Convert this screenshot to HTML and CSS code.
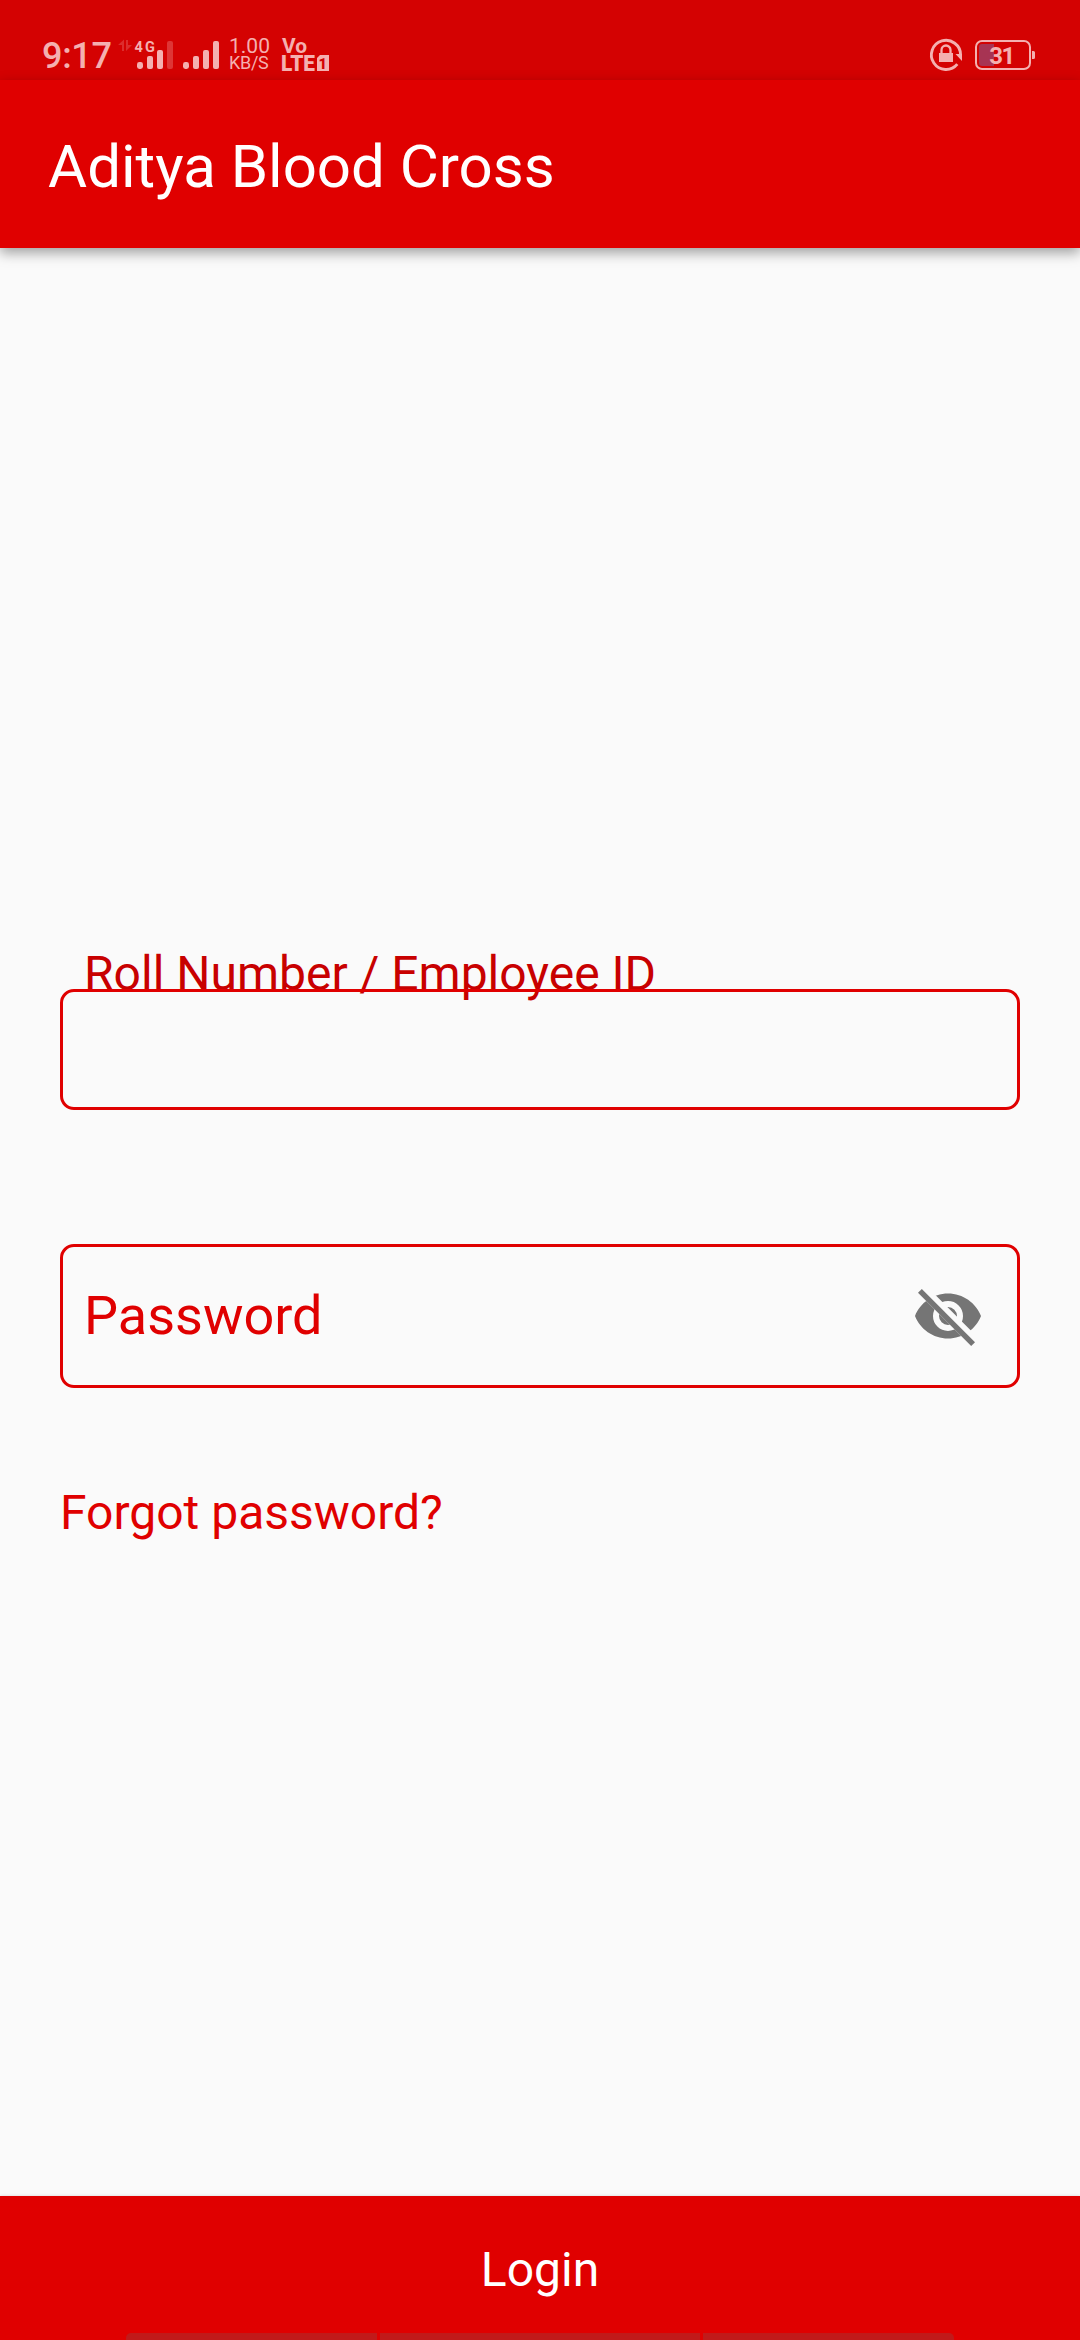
FILE: index.html
```html
<!DOCTYPE html>
<html lang="en">
<head>
<meta charset="utf-8">
<title>Aditya Blood Cross</title>
<link rel="stylesheet" href="styles.css">
</head>
<body>
<div class="screen">
  <div class="status-bar">
    <span class="clock">9:17</span>
    <svg class="signals" width="106" height="80" viewBox="0 0 106 80" fill="currentColor">
      <path class="faint" d="M0 45l6-5.500v11.500H4v-6H0zM8 40h2v5h4l-6 6z"/>
      <text x="16.500" y="51.800" class="network" textLength="20.500">4G</text>
      <rect x="19" y="62" width="6" height="7" rx="2.4"/>
      <rect x="29" y="56" width="6" height="13" rx="2"/>
      <rect x="39" y="50" width="6" height="19" rx="2"/>
      <rect class="dim" x="49" y="41" width="6" height="28" rx="2"/>
      <rect x="65" y="62" width="6" height="7" rx="2.4"/>
      <rect x="75" y="56" width="6" height="13" rx="2"/>
      <rect x="85" y="50" width="6" height="19" rx="2"/>
      <rect x="95" y="41" width="6" height="28" rx="2"/>
    </svg>
    <div class="speed"><span>1.00</span><span class="unit">KB/S</span></div>
    <svg class="volte" width="50" height="80" viewBox="0 0 50 80" fill="currentColor">
      <text x="0" y="53" class="vo" textLength="25" lengthAdjust="spacingAndGlyphs">Vo</text>
      <text x="-1" y="71" class="lte" textLength="34" lengthAdjust="spacingAndGlyphs">LTE</text>
      <path d="M38 55h9v16H35V58z"/>
      <text x="36.500" y="68.500" class="sim">1</text>
    </svg>
    <svg class="rotation-lock" width="34" height="80" viewBox="0 0 34 80" fill="currentColor">
      <path d="M27.300 64.200A14.600 14.600 0 1 1 30.600 55" fill="none" stroke="currentColor" stroke-width="2.9"/>
      <path d="M25.500 54H32v7z"/>
      <path d="M9 53h14v9H9z"/>
      <path d="M11.500 53v-3a4.500 4.500 0 0 1 9 0v3" fill="none" stroke="currentColor" stroke-width="2.3"/>
    </svg>
    <svg class="battery" width="62" height="80" viewBox="0 0 62 80" fill="currentColor">
      <path class="charge" d="M7 44h12v22H7a3 3 0 0 1-3-3V47a3 3 0 0 1 3-3z"/>
      <rect x="1" y="41" width="54" height="28" rx="6" fill="none" stroke="currentColor" stroke-width="2"/>
      <path d="M57 51h1.500a1.500 1.500 0 0 1 1.500 1.500v5a1.500 1.500 0 0 1-1.500 1.500H57z"/>
      <text x="14.200" y="64" class="level" textLength="26">31</text>
    </svg>
  </div>
  <header class="app-bar"><h1 class="title">Aditya Blood Cross</h1></header>
  <main class="form">
    <label class="id-label" for="user-id">Roll Number / Employee ID</label>
    <input class="field id-field" id="user-id" type="text">
    <div class="field password-field">
      <span class="hint">Password</span>
      <svg width="72" height="72" viewBox="0 0 24 24" fill="#757575">
        <clipPath id="strike-gap"><path d="M2 4.270L19.730 22 22.270 19.460 4.540 1.730V1H23v22H1V4.270z"/></clipPath>
        <path clip-path="url(#strike-gap)" fill-rule="evenodd" d="M12 4.500C7 4.500 2.730 7.610 1 12c1.730 4.390 6 7.500 11 7.500s9.270-3.110 11-7.500C21.270 7.610 17 4.500 12 4.500zM12 17a5 5 0 1 1 0-10 5 5 0 0 1 0 10zM12 9a3 3 0 1 0 0 6 3 3 0 0 0 0-6z"/>
        <path d="M2 4.270L3.270 3 21 20.730 19.730 22z"/>
      </svg>
    </div>
    <a class="forgot">Forgot password?</a>
  </main>
  <button class="login">Login</button>
  <div class="keys"><i></i><i></i><i></i></div>
</div>
</body>
</html>
```
FILE: styles.css
```css
* { box-sizing: border-box; }

body {
  margin: 0;
  font-family: Roboto, sans-serif;
  background: #fafafa;
}

.screen {
  position: relative;
  width: 1080px;
  height: 2340px;
  display: flex;
  flex-direction: column;
  overflow: hidden;
}

.status-bar {
  height: 80px;
  flex: none;
  display: flex;
  padding: 0 43px 0 42px;
  background: #d40202;
  color: #f4b0b0;
}

.status-bar svg { flex: none; overflow: visible; }

.clock {
  width: 76px;
  font-size: 36px;
  font-weight: 500;
  line-height: 42px;
  padding-top: 35px;
  letter-spacing: -0.3px;
}

.faint { opacity: 0.25; }
.dim { opacity: 0.3; }
.network { font-size: 14.5px; font-weight: 700; }

.speed {
  width: 42px;
  margin-left: 5px;
  padding-top: 37px;
  display: flex;
  flex-direction: column;
  font-size: 21px;
  line-height: 19px;
}

.unit { font-size: 18px; line-height: 14px; letter-spacing: -0.3px; }

.volte { margin-left: 11px; }
.vo { font-size: 21px; font-weight: 700; }
.lte { font-size: 22.5px; font-weight: 900; }
.sim { font-size: 14.5px; font-weight: 900; fill: #d40202; }

.rotation-lock { margin-left: auto; }
.battery { margin-left: 11px; }
.charge { fill: #a73453; }
.level { font-size: 24px; font-weight: 700; }

.app-bar {
  height: 168px;
  flex: none;
  padding: 52px 48px 0;
  background: #e00000;
  box-shadow: 0 5px 12px rgba(0, 0, 0, 0.36);
}

.title {
  margin: 0;
  font-size: 60px;
  font-weight: 400;
  line-height: 70px;
  color: #fff;
}

.form {
  flex: 1;
  display: flex;
  flex-direction: column;
  padding: 698px 60px 0;
}

.id-label {
  height: 43px;
  padding-left: 24px;
  font-size: 48px;
  line-height: 56px;
  color: #c80000;
}

.field {
  flex: none;
  border: 3px solid #e00000;
  border-radius: 14px;
}

.id-field {
  position: relative;
  width: 960px;
  height: 121px;
  margin: 0;
  background: transparent;
}

.password-field {
  height: 144px;
  margin-top: 134px;
  padding: 0 33px 0 21px;
  display: flex;
  align-items: center;
  justify-content: space-between;
  font-size: 54px;
  color: #e00000;
}

.hint { padding-bottom: 2px; }

.forgot {
  margin-top: 97px;
  font-size: 48px;
  line-height: 56px;
  color: #e00000;
}

.login {
  height: 144px;
  flex: none;
  border: 0;
  padding: 4px 0 0;
  background: #e00000;
  box-shadow: 0 0 3px rgba(0, 0, 0, 0.15);
  color: #fff;
  font: 400 48px/56px Roboto, sans-serif;
}

/* Keyboard edge showing above the bottom of the screen */
.keys {
  position: absolute;
  left: 126px;
  bottom: 0;
  width: 828px;
  height: 7px;
  display: grid;
  grid-template-columns: 251px 320px 251px;
  gap: 3px;
  border-radius: 5px 5px 0 0;
  overflow: hidden;
}

.keys i { background: #c11a1a; }
```
